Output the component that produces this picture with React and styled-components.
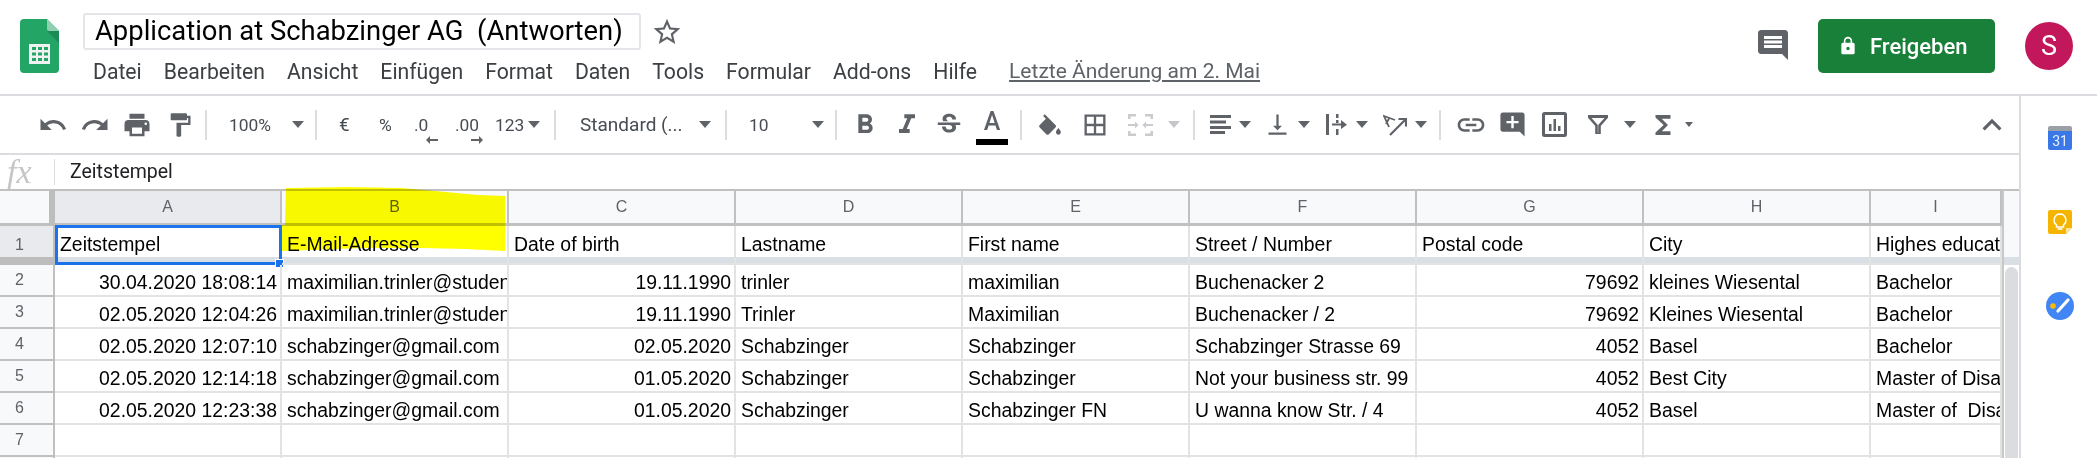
import React from 'react'
import styled, { createGlobalStyle } from 'styled-components'
import {
  MdUndo, MdRedo, MdPrint, MdFormatPaint, MdFormatBold, MdFormatItalic, MdStrikethroughS,
  MdBorderAll, MdVerticalAlignBottom, MdLink, MdAddComment, MdFunctions, MdExpandLess,
  MdComment, MdLock, MdStarBorder,
} from 'react-icons/md'

const GlobalStyle = createGlobalStyle`
  html, body { margin: 0; padding: 0; background: #fff; }
  * { box-sizing: border-box; }
`

const Page = styled.div`
  position: relative;
  width: 2097px;
  height: 458px;
  overflow: hidden;
  background: #fff;
  font-family: Roboto, 'Liberation Sans', sans-serif;
  color: #202124;
`

const Header = styled.header`
  display: flex;
  height: 96px;
  border-bottom: 2px solid #dadce0;
  padding: 13px 24px 0 20px;
`

const Logo = styled.svg`
  flex: none;
  width: 39px;
  height: 54px;
  margin-top: 6px;
`

const TitleBlock = styled.div`
  display: flex;
  flex-direction: column;
  margin-left: 24px;
`

const TitleRow = styled.div`
  display: flex;
  align-items: center;
`

const TitleBox = styled.div`
  width: 558px;
  height: 37px;
  border: 2px solid #e3e5e8;
  border-radius: 3px;
  padding-left: 10px;
  font-size: 27.4px;
  line-height: 32px;
  color: #000;
  white-space: pre;
`

const Star = styled.span`
  display: flex;
  margin-left: 10px;
  color: #5f6368;
`

const MenuBar = styled.nav`
  display: flex;
  align-items: center;
  gap: 22px;
  height: 24px;
  margin-top: 9px;
  padding-left: 10px;
`

const MenuItem = styled.span`
  font-size: 21.2px;
  color: #3c4043;
  white-space: nowrap;
`

const LastEdit = styled.span`
  margin-left: 10px;
  font-size: 21px;
  color: #5f6368;
  text-decoration: underline;
  white-space: nowrap;
`

const Actions = styled.div`
  display: flex;
  align-items: flex-start;
  margin-left: auto;
`

const CommentsButton = styled.span`
  display: flex;
  margin: 14px 27px 0 0;
  color: #5f6368;
`

const ShareButton = styled.div`
  display: flex;
  align-items: center;
  width: 177px;
  height: 54px;
  margin-top: 6px;
  padding-left: 20px;
  gap: 12px;
  border-radius: 5px;
  background: #188038;
  color: #fff;
  font-size: 22px;
  font-weight: 500;
`

const Avatar = styled.div`
  display: flex;
  align-items: center;
  justify-content: center;
  width: 48px;
  height: 48px;
  margin: 9px 0 0 30px;
  border-radius: 50%;
  background: #c2185b;
  color: #fff;
  font-size: 27px;
`

const Body = styled.div`
  display: flex;
`

const Main = styled.div`
  width: 2019px;
  flex: none;
`

const SidePanel = styled.aside`
  flex: 1;
  height: 362px;
  border-left: 2px solid #dadce0;
  display: flex;
  flex-direction: column;
  align-items: center;
  padding: 30px 0 0 0;
`

const SideIcon = styled.svg`
  flex: none;
  width: ${p => p.$size}px;
  height: ${p => p.$size}px;
  margin-top: ${p => p.$top}px;
  margin-left: 2px;
`

const Toolbar = styled.div`
  display: flex;
  align-items: center;
  height: 59px;
  border-bottom: 2px solid #dadce0;
  padding: 0 18px 0 40px;
  color: #5f6368;
`

const Tool = styled.div`
  position: relative;
  flex: none;
  display: flex;
  align-items: center;
  justify-content: center;
  width: ${p => p.$w}px;
  margin-left: ${p => p.$gap || 0}px;
  height: 32px;
  svg { flex: none; }
`

const ToolText = styled(Tool)`
  justify-content: flex-start;
  font-size: ${p => p.$size || 17.4}px;
  color: #474c52;
  white-space: nowrap;
`

const Divider = styled.div`
  flex: none;
  width: 2px;
  height: 30px;
  margin-left: ${p => p.$gap}px;
  background: #dadce0;
`

const Caret = styled.div`
  flex: none;
  width: 0;
  height: 0;
  margin-left: ${p => p.$gap}px;
  border-style: solid;
  border-color: ${p => (p.$muted ? '#c4c6c9' : '#5f6368')} transparent transparent;
  border-width: ${p => (p.$small ? '5px 4px 0' : '7px 6.5px 0')};
`

const SmallArrow = styled.svg`
  position: absolute;
  left: ${p => p.$left}px;
  top: 27px;
  width: 12px;
  height: 8px;
`

const TextColor = styled(Tool)`
  flex-direction: column;
  height: 38px;
  margin-top: 2px;
`

const ColorLetter = styled.span`
  font-size: 25px;
  font-weight: 500;
  line-height: 30px;
  color: #5f6368;
`

const ColorBar = styled.div`
  width: 32px;
  height: 6px;
  margin-top: 2px;
  background: #000;
`

const Collapse = styled(Tool)`
  margin-left: auto;
`

const FormulaBar = styled.div`
  display: flex;
  align-items: center;
  height: 34px;
`

const FxLabel = styled.span`
  width: 54px;
  padding-left: 7px;
  font-family: 'Liberation Serif', serif;
  font-style: italic;
  font-size: 34px;
  line-height: 30px;
  color: #c4c7c5;
`

const FormulaDivider = styled.div`
  width: 1px;
  height: 26px;
  background: #dadce0;
`

const FormulaText = styled.span`
  margin: -2px 0 0 15px;
  font-size: 19.5px;
  color: #202124;
`

const Sheet = styled.div`
  display: flex;
`

const GridArea = styled.div`
  width: 2002px;
  flex: none;
`

const GridRow = styled.div`
  display: grid;
  grid-template-columns: 55px repeat(8, 227px) 131px;
  height: ${p => p.$h}px;
`

const Corner = styled.div`
  border-top: 2px solid #c0c0c0;
  border-bottom: 3px solid #c0c0c0;
  border-right: 6px solid #bdbdbd;
  background: #f8f9fa;
`

const ColHead = styled.div`
  display: flex;
  align-items: center;
  justify-content: center;
  border-top: 2px solid #c0c0c0;
  border-bottom: 3px solid #c0c0c0;
  border-right: 2px solid #c0c0c0;
  background: ${p => (p.$active ? '#e8eaed' : '#f8f9fa')};
  color: #5f6368;
  font-family: 'Liberation Sans', sans-serif;
  font-size: 16px;
`

const RowHead = styled.div`
  display: flex;
  align-items: center;
  justify-content: center;
  padding-right: 14px;
  border-bottom: 2px solid #c0c0c0;
  border-right: 2px solid #c0c0c0;
  background: ${p => (p.$active ? '#e8eaed' : '#f8f9fa')};
  color: #5f6368;
  font-family: 'Liberation Sans', sans-serif;
  font-size: 16px;
`

const Cell = styled.div`
  position: relative;
  overflow: ${p => (p.$selected ? 'visible' : 'hidden')};
  padding: 0 3px 0 5px;
  border-bottom: 2px solid #e2e3e3;
  border-right: 2px solid #e2e3e3;
  font-family: 'Liberation Sans', Arial, sans-serif;
  font-size: 19.4px;
  line-height: ${p => (p.$title ? 37 : 35)}px;
  color: #000;
  white-space: pre;
  text-align: ${p => (p.$right ? 'right' : 'left')};
`

const Selection = styled.div`
  position: absolute;
  inset: -1px -2px -2px 0;
  border: 3px solid #1a73e8;
  pointer-events: none;
`

const FillHandle = styled.div`
  position: absolute;
  right: -5px;
  bottom: -6px;
  width: 9px;
  height: 9px;
  background: #1a73e8;
  border: 1px solid #fff;
`

const FrozenBand = styled.div`
  display: grid;
  grid-template-columns: 55px 1fr;
  height: 8px;
  background: #dadfe5;
`

const FrozenBandHead = styled.div`
  background: #bdbdbd;
`

const ScrollColumn = styled.div`
  flex: 1;
  display: flex;
  flex-direction: column;
  border-left: 2px solid #c8c8c8;
  border-top: 2px solid #c0c0c0;
`

const ScrollHead = styled.div`
  height: 66px;
  background: #f8f9fa;
`

const ScrollBand = styled.div`
  height: 8px;
  background: #dadfe5;
`

const ScrollThumb = styled.div`
  width: 13px;
  height: 300px;
  margin: 2px 0 0 1px;
  border-radius: 7px;
  background: #dadce0;
`

const Highlighter = styled.svg`
  position: absolute;
  left: 282px;
  top: 185px;
  width: 226px;
  height: 70px;
  mix-blend-mode: multiply;
`

const columns = ['A', 'B', 'C', 'D', 'E', 'F', 'G', 'H', 'I']
const rightAligned = [true, false, true, false, false, false, true, false, false]

const titles = ['Zeitstempel', 'E-Mail-Adresse', 'Date of birth', 'Lastname', 'First name', 'Street / Number', 'Postal code', 'City', 'Highes education']

const rows = [
  ['30.04.2020 18:08:14', 'maximilian.trinler@student.ch', '19.11.1990', 'trinler', 'maximilian', 'Buchenacker 2', '79692', 'kleines Wiesental', 'Bachelor'],
  ['02.05.2020 12:04:26', 'maximilian.trinler@student.ch', '19.11.1990', 'Trinler', 'Maximilian', 'Buchenacker / 2', '79692', 'Kleines Wiesental', 'Bachelor'],
  ['02.05.2020 12:07:10', 'schabzinger@gmail.com', '02.05.2020', 'Schabzinger', 'Schabzinger', 'Schabzinger Strasse 69', '4052', 'Basel', 'Bachelor'],
  ['02.05.2020 12:14:18', 'schabzinger@gmail.com', '01.05.2020', 'Schabzinger', 'Schabzinger', 'Not your business str. 99', '4052', 'Best City', 'Master of Disaster'],
  ['02.05.2020 12:23:38', 'schabzinger@gmail.com', '01.05.2020', 'Schabzinger', 'Schabzinger FN', 'U wanna know Str. / 4', '4052', 'Basel', 'Master of  Disaster'],
  ['', '', '', '', '', '', '', '', ''],
  ['', '', '', '', '', '', '', '', ''],
]

const menu = ['Datei', 'Bearbeiten', 'Ansicht', 'Einfügen', 'Format', 'Daten', 'Tools', 'Formular', 'Add-ons', 'Hilfe']

function App() {
  return (
    <Page>
      <GlobalStyle />
      <Header>
        <Logo viewBox="0 0 39 54">
          <path d="M4 0h23l12 12v38a4 4 0 0 1-4 4H4a4 4 0 0 1-4-4V4a4 4 0 0 1 4-4z" fill="#23a566" />
          <path d="M27 12l12 12V12z" fill="#1c8a57" />
          <path d="M27 0l12 12H29a2 2 0 0 1-2-2z" fill="#8ed1b1" />
          <path d="M9 25h21v20H9z" fill="#f1f1f1" />
          <path d="M12 28h4v3h-4zM18 28h4v3h-4zM24 28h4v3h-4zM12 33.5h4v3h-4zM18 33.5h4v3h-4zM24 33.5h4v3h-4zM12 39h4v3h-4zM18 39h4v3h-4zM24 39h4v3h-4z" fill="#23a566" />
        </Logo>
        <TitleBlock>
          <TitleRow>
            <TitleBox>Application at Schabzinger AG  (Antworten)</TitleBox>
            <Star><MdStarBorder size={32} /></Star>
          </TitleRow>
          <MenuBar>
            {menu.map(item => <MenuItem key={item}>{item}</MenuItem>)}
            <LastEdit>Letzte Änderung am 2. Mai</LastEdit>
          </MenuBar>
        </TitleBlock>
        <Actions>
          <CommentsButton><MdComment size={36} /></CommentsButton>
          <ShareButton>
            <MdLock size={20} />
            Freigeben
          </ShareButton>
          <Avatar>S</Avatar>
        </Actions>
      </Header>

      <Body>
        <Main>
          <Toolbar>
            <Tool $w={25}><MdUndo size={30} /></Tool>
            <Tool $w={24} $gap={18}><MdRedo size={30} /></Tool>
            <Tool $w={25} $gap={17}><MdPrint size={30} /></Tool>
            <Tool $w={20} $gap={21}><MdFormatPaint size={28} /></Tool>
            <Divider $gap={15} />
            <ToolText $w={43} $gap={22}>100%</ToolText>
            <Caret $gap={20} />
            <Divider $gap={11} />
            <ToolText $w={9} $gap={22} $size={19}>€</ToolText>
            <ToolText $w={13} $gap={31}>%</ToolText>
            <ToolText $w={16} $gap={22}>
              .0
              <SmallArrow $left={12} viewBox="0 0 12 8"><path d="M4 0v3h8v2H4v3L0 4z" fill="#5f6368" /></SmallArrow>
            </ToolText>
            <ToolText $w={25} $gap={25}>
              .00
              <SmallArrow $left={16} viewBox="0 0 12 8"><path d="M8 0v3H0v2h8v3l4-4z" fill="#5f6368" /></SmallArrow>
            </ToolText>
            <ToolText $w={30} $gap={15}>123</ToolText>
            <Caret $gap={3} />
            <Divider $gap={14} />
            <ToolText $w={96} $gap={24} $size={19}>Standard (...</ToolText>
            <Caret $gap={23} />
            <Divider $gap={14} />
            <ToolText $w={20} $gap={22}>10</ToolText>
            <Caret $gap={43} />
            <Divider $gap={11} />
            <Tool $w={15} $gap={20}><MdFormatBold size={32} /></Tool>
            <Tool $w={17} $gap={26}><MdFormatItalic size={32} /></Tool>
            <Tool $w={22} $gap={23}><MdStrikethroughS size={30} /></Tool>
            <TextColor $w={32} $gap={16}>
              <ColorLetter>A</ColorLetter>
              <ColorBar />
            </TextColor>
            <Divider $gap={12} />
            <Tool $w={22} $gap={17}>
              <svg width="24" height="23" viewBox="2 -1 20 19" fill="currentColor">
                <path d="M16.56 8.94L7.62 0 6.21 1.41l2.38 2.38-5.15 5.15c-.59.59-.59 1.54 0 2.12l5.5 5.5c.29.29.68.44 1.06.44s.77-.15 1.06-.44l5.5-5.5c.59-.58.59-1.53 0-2.12zM19 11.5s-2 2.17-2 3.5c0 1.1.9 2 2 2s2-.9 2-2c0-1.33-2-3.5-2-3.5z" />
              </svg>
            </Tool>
            <Tool $w={21} $gap={23}><MdBorderAll size={28} /></Tool>
            <Tool $w={25} $gap={23}>
              <svg width="25" height="22" viewBox="0 0 25 22" fill="#c9cbce">
                <path d="M0 0h8v2.500H2.500V5H0zM17 0h8v5h-2.500V2.500H17zM0 17h2.500v2.500H8V22H0zM22.500 17H25v5h-8v-2.500h5.500zM0 10h7V7.500l3.500 3.500L7 14.500V12H0zM25 10h-7V7.500L14.500 11l3.500 3.500V12h7z" />
              </svg>
            </Tool>
            <Caret $gap={15} $muted />
            <Divider $gap={13} />
            <Tool $w={21} $gap={15}>
              <svg width="21" height="19" viewBox="0 0 21 19" fill="currentColor">
                <path d="M0 0h21v3H0zM0 5.500h16v3H0zM0 11h21v3H0zM0 16h15v3H0z" />
              </svg>
            </Tool>
            <Caret $gap={8} />
            <Tool $w={18} $gap={17}><MdVerticalAlignBottom size={27} /></Tool>
            <Caret $gap={12} />
            <Tool $w={20} $gap={16}>
              <svg width="21" height="21" viewBox="0 0 21 21" fill="currentColor">
                <path d="M0 0h3v21H0zM10 0h2.500v4H10zM10 6h2.500v3H10zM10 15h2.500v6H10zM6 9.500h9V6l6 4.700-6 4.300v-3.500H6z" />
              </svg>
            </Tool>
            <Caret $gap={10} />
            <Tool $w={24} $gap={15}>
              <svg width="24" height="22" viewBox="0 0 24 22" fill="none" stroke="currentColor" strokeWidth="2.200">
                <path d="M6 13L1 2l11 4M6 4.500L3 10" strokeWidth="1.800" />
                <path d="M7 21L22 6M15.500 5H23v7.500" />
              </svg>
            </Tool>
            <Caret $gap={8} />
            <Divider $gap={12} />
            <Tool $w={27} $gap={16}><MdLink size={32} /></Tool>
            <Tool $w={24} $gap={16}><MdAddComment size={29} /></Tool>
            <Tool $w={25} $gap={18}>
              <svg width="25" height="25" viewBox="0 0 25 25">
                <rect x="1.500" y="1.500" width="22" height="22" rx="1" fill="none" stroke="currentColor" strokeWidth="3" />
                <path d="M7 12h2.500v7H7zM11.500 7h2.500v12h-2.500zM16 14h2.500v5H16z" fill="currentColor" />
              </svg>
            </Tool>
            <Tool $w={22} $gap={20}>
              <svg width="22" height="19" viewBox="0 0 22 19" fill="none" stroke="currentColor">
                <path d="M1 0h20v3H1z" fill="currentColor" stroke="none" />
                <path d="M2 2l7.500 8.500V19h3v-8.500L20 2" strokeWidth="2.600" />
              </svg>
            </Tool>
            <Caret $gap={15} />
            <Tool $w={15} $gap={19}><MdFunctions size={30} /></Tool>
            <Caret $gap={15} $small />
            <Collapse $w={19}><MdExpandLess size={38} /></Collapse>
          </Toolbar>

          <FormulaBar>
            <FxLabel>fx</FxLabel>
            <FormulaDivider />
            <FormulaText>Zeitstempel</FormulaText>
          </FormulaBar>

          <Sheet>
            <GridArea>
              <GridRow $h={37}>
                <Corner />
                {columns.map((c, i) => <ColHead key={c} $active={i === 0}>{c}</ColHead>)}
              </GridRow>
              <GridRow $h={31}>
                <RowHead $active>1</RowHead>
                {titles.map((t, i) => (
                  <Cell key={t} $title $selected={i === 0}>
                    {t}
                    {i === 0 && <Selection><FillHandle /></Selection>}
                  </Cell>
                ))}
              </GridRow>
              <FrozenBand><FrozenBandHead /></FrozenBand>
              {rows.map((row, r) => (
                <GridRow key={r} $h={32}>
                  <RowHead>{r + 2}</RowHead>
                  {row.map((value, c) => <Cell key={c} $right={rightAligned[c]}>{value}</Cell>)}
                </GridRow>
              ))}
            </GridArea>
            <ScrollColumn>
              <ScrollHead />
              <ScrollBand />
              <ScrollThumb />
            </ScrollColumn>
          </Sheet>
        </Main>

        <SidePanel>
          <SideIcon $size={24} $top={0} viewBox="0 0 24 24">
            <path d="M2 0h20a2 2 0 0 1 2 2v4H0V2a2 2 0 0 1 2-2z" fill="#9aa0a6" />
            <path d="M0 5h24v17a2 2 0 0 1-2 2H2a2 2 0 0 1-2-2z" fill="#3b78e7" />
            <text x="12" y="20" textAnchor="middle" fontSize="14" fontFamily="Roboto, sans-serif" fill="#e8f0fe">31</text>
          </SideIcon>
          <SideIcon $size={24} $top={60} viewBox="0 0 24 24">
            <path d="M2 0h20a2 2 0 0 1 2 2v16l-6 6H2a2 2 0 0 1-2-2V2a2 2 0 0 1 2-2z" fill="#f4b400" />
            <path d="M24 18l-6 6v-6z" fill="#fbe3a0" />
            <path d="M12 4a6 6 0 0 0-3.500 10.800V17h7v-2.200A6 6 0 0 0 12 4zM9.500 19h5" fill="none" stroke="#fff" strokeWidth="1.500" />
          </SideIcon>
          <SideIcon $size={28} $top={58} viewBox="0 0 28 28">
            <circle cx="14" cy="14" r="14" fill="#4285f4" />
            <path d="M12 19L22 8" stroke="#fff" strokeWidth="3.200" strokeLinecap="round" />
            <circle cx="7" cy="14" r="2.800" fill="#fbbc04" />
          </SideIcon>
        </SidePanel>
      </Body>

      <Highlighter viewBox="0 0 226 70">
        <path d="M4 3L66 2L120 3L164 7L196 10L223 11V66L184 64L140 63L80 63L0 66V40H3z" fill="#ffff00" />
      </Highlighter>
    </Page>
  )
}

export default App
